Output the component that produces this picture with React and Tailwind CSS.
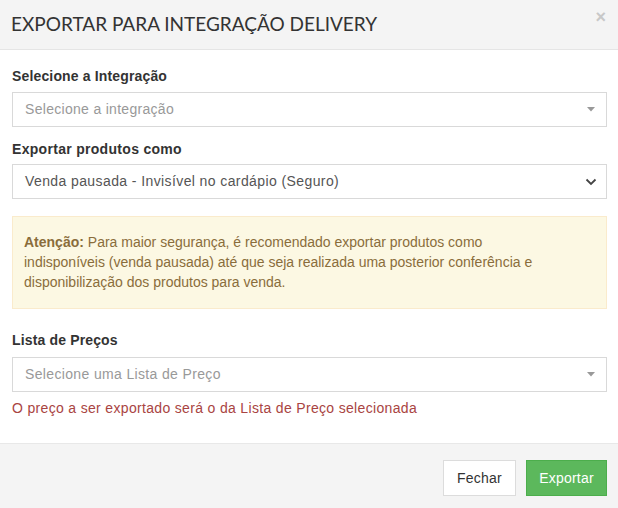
import React from "react";

function Caret() {
  return (
    <svg width="8" height="5" viewBox="0 0 8 5" className="shrink-0">
      <path d="M0 0 L8 0 L4 4.5 Z" fill="#999" />
    </svg>
  );
}

function Chevron() {
  return (
    <svg width="12" height="8" viewBox="0 0 12 8" className="shrink-0">
      <path d="M1.5 1.5 L6 6 L10.5 1.5" fill="none" stroke="#444" strokeWidth="1.8" />
    </svg>
  );
}

export default function App() {
  return (
    <div className="w-[618px] h-[508px] bg-white flex flex-col font-['Liberation_Sans',Arial,sans-serif] text-[14px] text-[#333]">
      <div className="h-[50px] shrink-0 bg-[#f4f4f4] border-b border-[#e5e5e5] flex items-center justify-between pl-[11px] pr-[12px] pb-[3px]">
        <h4 className="font-['Lato',sans-serif] text-[19px] text-[#333] leading-none">
          EXPORTAR PARA INTEGRAÇÃO DELIVERY
        </h4>
        <span className="text-[#c8c8c8] text-[18px] font-bold leading-none -mt-[12px]">×</span>
      </div>

      <div className="flex-1 px-3 pt-[16px]">
        <label className="block font-bold leading-5 mb-[6px] tracking-[0.15px]">Selecione a Integração</label>
        <div className="h-[35px] w-[595px] border border-[#d9d9d9] flex items-center justify-between pl-3 pr-[11px] text-[#999] tracking-[0.3px]">
          <span>Selecione a integração</span>
          <Caret />
        </div>

        <label className="block font-bold leading-5 mt-[12px] mb-[5px] tracking-[0.3px]">Exportar produtos como</label>
        <div className="h-[35px] w-[595px] border border-[#d9d9d9] flex items-center justify-between pl-3 pr-[9px] text-[#555] tracking-[0.4px]">
          <span>Venda pausada - Invisível no cardápio (Seguro)</span>
          <Chevron />
        </div>

        <div className="mt-[17px] w-[595px] h-[93px] bg-[#fcf8e3] border border-[#faebcc] text-[#8a6d3b] px-[11px] pt-[15px] leading-5">
          <b>Atenção:</b> Para maior segurança, é recomendado exportar produtos como
          <br />
          indisponíveis (venda pausada) até que seja realizada uma posterior conferência e
          <br />
          disponibilização dos produtos para venda.
        </div>

        <label className="block font-bold leading-5 mt-[21px] mb-[7px] tracking-[0.15px]">Lista de Preços</label>
        <div className="h-[35px] w-[595px] border border-[#d9d9d9] flex items-center justify-between pl-3 pr-[11px] text-[#999] tracking-[0.35px]">
          <span>Selecione uma Lista de Preço</span>
          <Caret />
        </div>
        <div className="text-[#a94442] leading-5 mt-[6px] tracking-[0.33px]">O preço a ser exportado será o da Lista de Preço selecionada</div>
      </div>

      <div className="h-[65px] shrink-0 bg-[#f4f4f4] border-t border-[#e8e8e8] flex items-start justify-end gap-[10px] pt-[16px] pr-[11px]">
        <button className="h-[36px] w-[73px] bg-white border border-[#dcdcdc] text-[#333] text-[14px] tracking-[0.2px]">Fechar</button>
        <button className="h-[36px] w-[81px] bg-[#5cb85c] border border-[#4cae4c] text-white text-[14px] tracking-[0.2px]">Exportar</button>
      </div>
    </div>
  );
}
